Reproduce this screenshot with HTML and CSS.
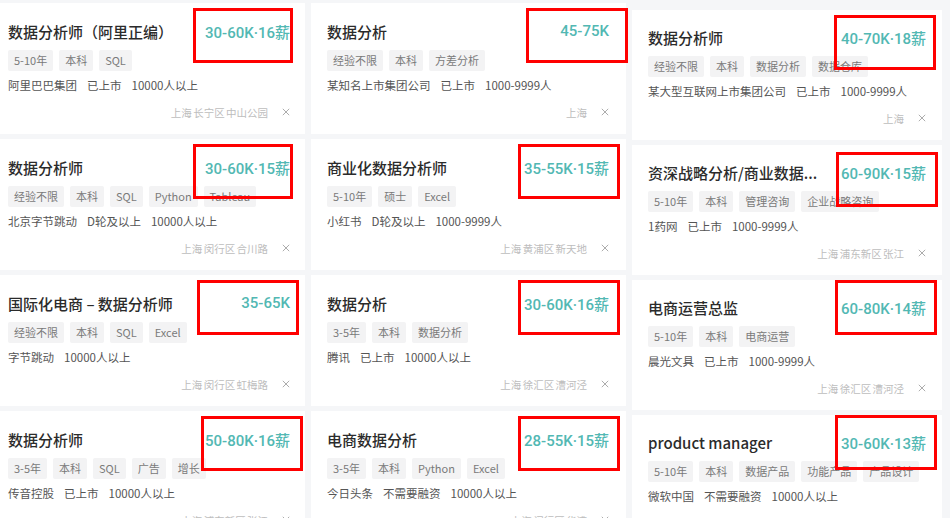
FILE: index.html
```html
<!DOCTYPE html>
<html>
<head>
  <title>职位列表</title>
  <link rel="stylesheet" href="styles.css">
</head>
<body>
  <div class="board">
    <!-- 第一列 -->
    <div class="col col-1">
      <div class="card">
        <div class="head">
          <div class="title">数据分析师（阿里正编）</div>
          <div class="salary">30-60K·16薪</div>
        </div>
        <div class="tags"><span class="tag">5-10年</span><span class="tag">本科</span><span class="tag">SQL</span></div>
        <div class="company"><span>阿里巴巴集团</span><span>已上市</span><span>10000人以上</span></div>
        <div class="foot"><span>上海 长宁区 中山公园</span><svg class="close" viewBox="0 0 10 10"><path d="M1 1L9 9M9 1L1 9"/></svg></div>
        <div class="mark inset"></div>
      </div>
      <div class="card">
        <div class="head">
          <div class="title">数据分析师</div>
          <div class="salary">30-60K·15薪</div>
        </div>
        <div class="tags"><span class="tag">经验不限</span><span class="tag">本科</span><span class="tag">SQL</span><span class="tag">Python</span><span class="tag">Tableau</span></div>
        <div class="company"><span>北京字节跳动</span><span>D轮及以上</span><span>10000人以上</span></div>
        <div class="foot"><span>上海 闵行区 合川路</span><svg class="close" viewBox="0 0 10 10"><path d="M1 1L9 9M9 1L1 9"/></svg></div>
        <div class="mark inset"></div>
      </div>
      <div class="card">
        <div class="head">
          <div class="title">国际化电商 – 数据分析师</div>
          <div class="salary">35-65K</div>
        </div>
        <div class="tags"><span class="tag">经验不限</span><span class="tag">本科</span><span class="tag">SQL</span><span class="tag">Excel</span></div>
        <div class="company"><span>字节跳动</span><span>10000人以上</span></div>
        <div class="foot"><span>上海 闵行区 虹梅路</span><svg class="close" viewBox="0 0 10 10"><path d="M1 1L9 9M9 1L1 9"/></svg></div>
        <div class="mark"></div>
      </div>
      <div class="card">
        <div class="head">
          <div class="title">数据分析师</div>
          <div class="salary">50-80K·16薪</div>
        </div>
        <div class="tags"><span class="tag">3-5年</span><span class="tag">本科</span><span class="tag">SQL</span><span class="tag">广告</span><span class="tag">增长</span></div>
        <div class="company"><span>传音控股</span><span>已上市</span><span>10000人以上</span></div>
        <div class="foot"><span>上海 浦东新区 张江</span><svg class="close" viewBox="0 0 10 10"><path d="M1 1L9 9M9 1L1 9"/></svg></div>
        <div class="mark edge"></div>
      </div>
    </div>

    <!-- 第二列 -->
    <div class="col col-2">
      <div class="card">
        <div class="head">
          <div class="title">数据分析</div>
          <div class="salary">45-75K</div>
        </div>
        <div class="tags"><span class="tag">经验不限</span><span class="tag">本科</span><span class="tag">方差分析</span></div>
        <div class="company"><span>某知名上市集团公司</span><span>已上市</span><span>1000-9999人</span></div>
        <div class="foot"><span>上海</span><svg class="close" viewBox="0 0 10 10"><path d="M1 1L9 9M9 1L1 9"/></svg></div>
        <div class="mark out"></div>
      </div>
      <div class="card">
        <div class="head">
          <div class="title">商业化数据分析师</div>
          <div class="salary">35-55K·15薪</div>
        </div>
        <div class="tags"><span class="tag">5-10年</span><span class="tag">硕士</span><span class="tag">Excel</span></div>
        <div class="company"><span>小红书</span><span>D轮及以上</span><span>1000-9999人</span></div>
        <div class="foot"><span>上海 黄浦区 新天地</span><svg class="close" viewBox="0 0 10 10"><path d="M1 1L9 9M9 1L1 9"/></svg></div>
        <div class="mark"></div>
      </div>
      <div class="card">
        <div class="head">
          <div class="title">数据分析</div>
          <div class="salary">30-60K·16薪</div>
        </div>
        <div class="tags"><span class="tag">3-5年</span><span class="tag">本科</span><span class="tag">数据分析</span></div>
        <div class="company"><span>腾讯</span><span>已上市</span><span>10000人以上</span></div>
        <div class="foot"><span>上海 徐汇区 漕河泾</span><svg class="close" viewBox="0 0 10 10"><path d="M1 1L9 9M9 1L1 9"/></svg></div>
        <div class="mark"></div>
      </div>
      <div class="card">
        <div class="head">
          <div class="title">电商数据分析</div>
          <div class="salary">28-55K·15薪</div>
        </div>
        <div class="tags"><span class="tag">3-5年</span><span class="tag">本科</span><span class="tag">Python</span><span class="tag">Excel</span></div>
        <div class="company"><span>今日头条</span><span>不需要融资</span><span>10000人以上</span></div>
        <div class="foot"><span>上海 闵行区 华漕</span><svg class="close" viewBox="0 0 10 10"><path d="M1 1L9 9M9 1L1 9"/></svg></div>
        <div class="mark"></div>
      </div>
    </div>

    <!-- 第三列 -->
    <div class="col col-3">
      <div class="card">
        <div class="head">
          <div class="title">数据分析师</div>
          <div class="salary">40-70K·18薪</div>
        </div>
        <div class="tags"><span class="tag">经验不限</span><span class="tag">本科</span><span class="tag">数据分析</span><span class="tag">数据仓库</span></div>
        <div class="company"><span>某大型互联网上市集团公司</span><span>已上市</span><span>1000-9999人</span></div>
        <div class="foot"><span>上海</span><svg class="close" viewBox="0 0 10 10"><path d="M1 1L9 9M9 1L1 9"/></svg></div>
        <div class="mark"></div>
      </div>
      <div class="card">
        <div class="head">
          <div class="title">资深战略分析/商业数据...</div>
          <div class="salary">60-90K·15薪</div>
        </div>
        <div class="tags"><span class="tag">5-10年</span><span class="tag">本科</span><span class="tag">管理咨询</span><span class="tag">企业战略咨询</span></div>
        <div class="company"><span>1药网</span><span>已上市</span><span>1000-9999人</span></div>
        <div class="foot"><span>上海 浦东新区 张江</span><svg class="close" viewBox="0 0 10 10"><path d="M1 1L9 9M9 1L1 9"/></svg></div>
        <div class="mark low"></div>
      </div>
      <div class="card">
        <div class="head">
          <div class="title">电商运营总监</div>
          <div class="salary">60-80K·14薪</div>
        </div>
        <div class="tags"><span class="tag">5-10年</span><span class="tag">本科</span><span class="tag">电商运营</span></div>
        <div class="company"><span>晨光文具</span><span>已上市</span><span>1000-9999人</span></div>
        <div class="foot"><span>上海 徐汇区 漕河泾</span><svg class="close" viewBox="0 0 10 10"><path d="M1 1L9 9M9 1L1 9"/></svg></div>
        <div class="mark up"></div>
      </div>
      <div class="card">
        <div class="head">
          <div class="title">product manager</div>
          <div class="salary">30-60K·13薪</div>
        </div>
        <div class="tags"><span class="tag">5-10年</span><span class="tag">本科</span><span class="tag">数据产品</span><span class="tag">功能产品</span><span class="tag">产品设计</span></div>
        <div class="company"><span>微软中国</span><span>不需要融资</span><span>10000人以上</span></div>
        <div class="foot"><span>上海 海淀区</span><svg class="close" viewBox="0 0 10 10"><path d="M1 1L9 9M9 1L1 9"/></svg></div>
        <div class="mark up"></div>
      </div>
    </div>
  </div>
</body>
</html>
```

FILE: styles.css
```css
:root {
  --page-bg: #f5f6f8;
  --card-bg: #ffffff;
  --title: #2b2b2b;
  --salary: #52b8b3;
  --text: #555555;
  --muted: #bdbdbd;
  --tag-bg: #f3f3f4;
  --tag-text: #7a7a7a;
  --mark: #ff0000;
}

body {
  margin: 0;
  width: 950px;
  height: 518px;
  overflow: hidden;
  background-color: var(--page-bg);
  font-family: "Noto Sans CJK SC", "Noto Sans", sans-serif;
}

.board {
  display: grid;
  grid-template-columns: 305px 315px 310px;
  column-gap: 6px;
}

.col {
  display: flex;
  flex-direction: column;
  gap: 5px;
  padding-top: 3px;
}

.col-3 {
  padding-top: 10px;
}

.card {
  position: relative;
  box-sizing: border-box;
  height: 131px;
  padding: 16px 17px 0 16px;
  background-color: var(--card-bg);
}

.col-1 .card {
  padding-left: 8px;
  padding-right: 15px;
}

.col-3 .card {
  height: 130px;
  padding-top: 15px;
  padding-right: 16px;
}

.head {
  display: flex;
  justify-content: space-between;
  align-items: center;
  height: 24px;
}

.title {
  font-size: 15px;
  font-weight: 500;
  color: var(--title);
  white-space: nowrap;
}

.salary {
  font-family: Roboto, "Noto Sans CJK SC", sans-serif;
  font-size: 15px;
  font-weight: 500;
  color: var(--salary);
  white-space: nowrap;
}

.tags {
  display: flex;
  gap: 6px;
  margin-top: 7px;
  overflow: hidden;
  white-space: nowrap;
}

.tag {
  height: 21px;
  line-height: 21px;
  padding: 0 6px;
  border-radius: 2px;
  background-color: var(--tag-bg);
  color: var(--tag-text);
  font-size: 11px;
}

.company {
  display: flex;
  gap: 10px;
  margin-top: 4px;
  line-height: 20px;
  font-size: 11.5px;
  color: var(--text);
  white-space: nowrap;
}

.foot {
  display: flex;
  justify-content: flex-end;
  align-items: center;
  gap: 14px;
  height: 18px;
  margin-top: 8px;
  font-size: 10.5px;
  word-spacing: -1px;
  color: var(--muted);
}

.close {
  width: 8px;
  height: 8px;
  fill: none;
  stroke: #a8a8a8;
  stroke-width: 1.2;
}

/* red annotation boxes drawn over the salary */
.mark {
  position: absolute;
  top: 5px;
  right: 6px;
  box-sizing: border-box;
  width: 102px;
  height: 55px;
  border: 3px solid var(--mark);
}

.mark.inset {
  right: 12px;
  width: 100px;
}

.mark.edge {
  right: 2px;
}

.mark.out {
  right: -2px;
}

.mark.low {
  top: 7px;
  right: 4px;
}

.mark.up {
  top: 0;
  right: 5px;
}
```
